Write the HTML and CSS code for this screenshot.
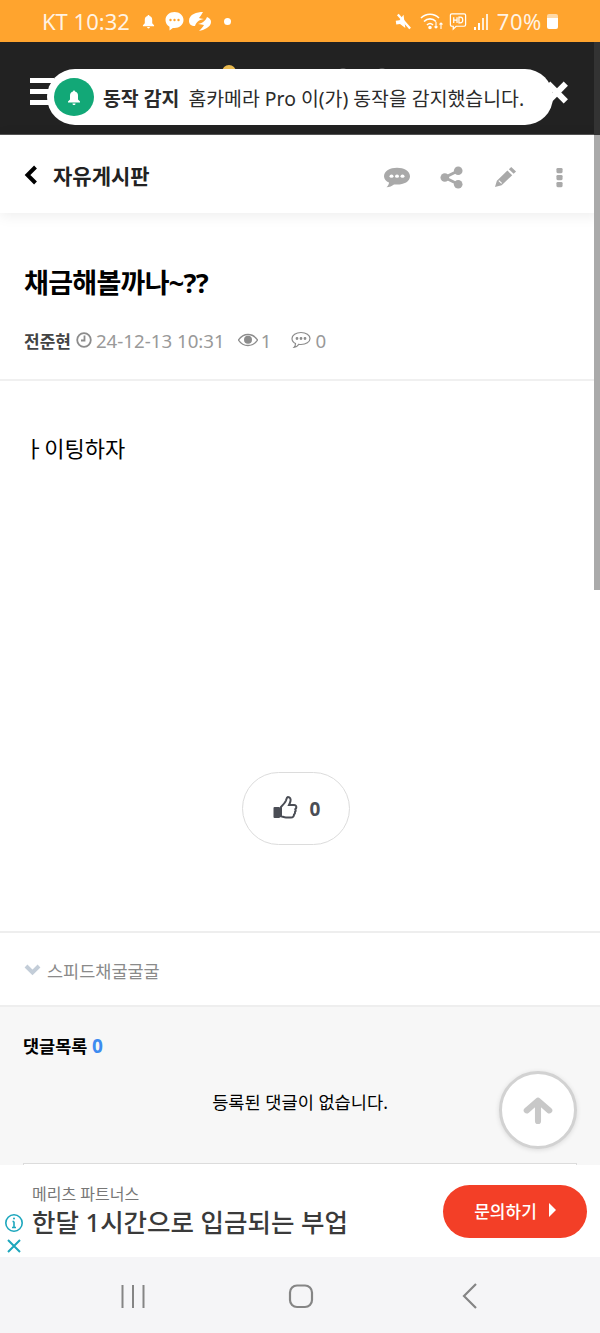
FILE: index.html
```html
<!DOCTYPE html>
<html lang="ko">
<head>
    <meta charset="UTF-8">
    <meta name="viewport" content="width=device-width, initial-scale=1.0">
    <title>자유게시판</title>
    <link rel="stylesheet" href="styles.css">
</head>
<body>

<div class="status-bar">
    <div class="status-left">
        <span class="status-text">KT 10:32</span>
        <svg class="st-bell" width="13" height="15" viewBox="0 0 14 16"><path d="M7 1c.7 0 1 .5 1 1 2 .5 3 2 3 4v4l2 2v1H1v-1l2-2V6c0-2 1-3.500 3-4 0-.5.3-1 1-1zM5.500 14h3c0 1-.6 1.500-1.500 1.500S5.500 15 5.500 14z" fill="#fff"/></svg>
        <svg class="st-chat" width="21" height="20" viewBox="0 0 20 20"><path d="M10 1c5 0 9 3.500 9 8s-4 8-9 8c-.6 0-1 0-1.600-.1L5 19.500v-3.700C2.500 14.300 1 11.800 1 9c0-4.500 4-8 9-8z" fill="#fff"/><circle cx="6" cy="9" r="1.200" fill="#ffa42e"/><circle cx="10" cy="9" r="1.200" fill="#ffa42e"/><circle cx="14" cy="9" r="1.200" fill="#ffa42e"/></svg>
        <svg class="st-swirl" width="22" height="21" viewBox="0 0 22 21"><path d="M14 1C8 1 0 3 0 10c0 3 2 5 6 5 1-3 3-6 9-7-3-.5-4-.8-5-1 2-2.500 3-4.500 4-6zM10 20c5-1 12-4 12-9 0-2-1-4-4-5-1 3-4 6-9 7 3 .5 4 .8 6 1-1 2-3 4-5 6z" fill="#fff"/></svg>
        <span class="status-dot"></span>
    </div>
    <div class="status-right">
        <svg class="st-mute" width="17" height="17" viewBox="0 0 18 18"><path d="M1 7h4l5-5v14l-5-5H1z" fill="#fff" transform="rotate(-8 9 9)"/><path d="M3 1.500l13 15" stroke="#fff" stroke-width="2.400"/></svg>
        <svg class="st-wifi" width="25" height="20" viewBox="0 0 25 20" fill="none" stroke="#fff" stroke-width="1.600"><path d="M1 7c5-5 13-5 18 0M4 10.500c3.500-3.500 8.500-3.500 12 0M7 14c2-2 4-2 6 0"/><circle cx="10" cy="16.500" r="1" fill="#fff"/><path d="M16 11v6M14.500 15.500L16 17l1.500-1.500M21 18v-6M19.500 13.500L21 12l1.500 1.500" stroke-width="1.100"/></svg>
        <svg class="st-hd" width="20" height="19" viewBox="0 0 20 20" fill="none" stroke="#fff" stroke-width="1.300"><path d="M3.500 2h13c1 0 1.500.5 1.500 1.500v10c0 1-.5 1.500-1.500 1.500H8l-3 3v-3H3.500C2.500 15 2 14.500 2 13.500v-10C2 2.500 2.500 2 3.500 2z"/><path d="M5.500 5.500v6M9 5.500v6M5.500 8.500H9M11 5.500v6h1.500c2 0 2.500-1.500 2.500-3s-.5-3-2.500-3z"/></svg>
        <svg class="st-signal" width="15" height="17" viewBox="0 0 15 17" fill="#fff"><rect x="0" y="14" width="2" height="3"/><rect x="4" y="10" width="2" height="7"/><rect x="8" y="5" width="2" height="12" opacity=".8"/><rect x="12" y="1" width="2" height="16" opacity=".8"/></svg>
        <span class="status-text pct">70%</span>
        <span class="battery"></span>
    </div>
</div>

<header class="top-bar">
    <div class="burger"><span></span><span></span><span></span></div>
    <span class="logo-bit gold"></span>
    <span class="logo-bit grey-one"></span>
    <span class="logo-bit grey-two"></span>
    <div class="close-mark"></div>
</header>

<div class="toast">
    <span class="toast-icon">
        <svg width="14" height="17" viewBox="0 0 14 16"><path d="M7 1c.7 0 1 .5 1 1 2 .5 3 2 3 4v4l2 2v1H1v-1l2-2V6c0-2 1-3.500 3-4 0-.5.3-1 1-1zM5.500 14h3c0 1-.6 1.500-1.500 1.500S5.500 15 5.500 14z" fill="#fff"/></svg>
    </span>
    <b class="toast-title">동작 감지</b>
    <span class="toast-text">홈카메라 Pro 이(가) 동작을 감지했습니다.</span>
</div>

<div class="sub-bar">
    <div class="sub-left">
        <svg width="16" height="20" viewBox="0 0 16 20"><path d="M12.500 2L4.500 10l8 8" fill="none" stroke="#000" stroke-width="4"/></svg>
        <span class="sub-title">자유게시판</span>
    </div>
    <div class="sub-icons">
        <svg class="ic-chat" width="28" height="22" viewBox="0 0 28 26" preserveAspectRatio="none"><path d="M14 2c7 0 13 4 13 10s-6 10-13 10c-1 0-2 0-3-.2C9 23.500 6.500 25 3.500 25c1.500-1.500 2.500-3.500 2.500-5.500C3 18 1 15.200 1 12 1 6 7 2 14 2z" fill="#a9a9a9"/><circle cx="8.500" cy="12" r="2" fill="#fff"/><circle cx="14" cy="12" r="2" fill="#fff"/><circle cx="19.500" cy="12" r="2" fill="#fff"/></svg>
        <svg class="ic-share" width="23" height="23" viewBox="0 0 24 24"><path d="M19 5L5 12l14 7" fill="none" stroke="#a9a9a9" stroke-width="3"/><circle cx="19" cy="5" r="4.500" fill="#a9a9a9"/><circle cx="5" cy="12" r="4.500" fill="#a9a9a9"/><circle cx="19" cy="19" r="4.500" fill="#a9a9a9"/></svg>
        <svg class="ic-pencil" width="23" height="22" viewBox="0 0 24 24" preserveAspectRatio="none"><path d="M18 1l5 5-2.500 2.500-5-5zM14 5l5 5L8 21l-7 2 2-7z" fill="#a9a9a9"/><path d="M5 16l3 3" stroke="#fff" stroke-width="1.200"/></svg>
        <svg class="ic-more" width="7" height="21" viewBox="0 0 8 24" preserveAspectRatio="none" fill="#a9a9a9"><rect x="0.500" y="1" width="7" height="6" rx="1.500"/><rect x="0.500" y="9" width="7" height="6" rx="1.500"/><rect x="0.500" y="17" width="7" height="6" rx="1.500"/></svg>
    </div>
</div>

<section class="post-head">
    <h1>채금해볼까나~??</h1>
    <div class="meta">
        <b class="author">전준현</b>
        <svg class="clock" width="16" height="16" viewBox="0 0 16 16" fill="none" stroke="#8c8c8c" stroke-width="1.800"><circle cx="8" cy="8" r="6.800"/><path d="M8.500 3.500v5H5"/></svg>
        <span>24-12-13 10:31</span>
        <svg class="eye" width="20" height="14" viewBox="0 0 20 14"><path d="M10 1.500c4 0 7.500 2.500 9.500 5.500-2 3-5.500 5.500-9.500 5.500S2.500 10 .5 7C2.500 4 6 1.500 10 1.500z" fill="none" stroke="#8c8c8c" stroke-width="1.300"/><circle cx="10" cy="6.800" r="4" fill="#8c8c8c"/></svg>
        <span>1</span>
        <svg class="bubble" width="20" height="18" viewBox="0 0 20 18" fill="none" stroke="#8c8c8c" stroke-width="1.200"><path d="M10 1.500c5 0 9 2.500 9 6s-4 6-9 6c-.8 0-1.500 0-2.200-.2C6.500 15 5 16.500 3 16.500c1-1 1.500-2.300 1.500-4C2.300 11.500 1 9.600 1 7.500c0-3.500 4-6 9-6z"/><circle cx="6" cy="7.500" r=".8" fill="#8c8c8c"/><circle cx="10" cy="7.500" r=".8" fill="#8c8c8c"/><circle cx="14" cy="7.500" r=".8" fill="#8c8c8c"/></svg>
        <span>0</span>
    </div>
</section>

<section class="post-body">
    <p class="post-text">ㅏ이팅하자</p>
    <div class="like-wrap">
        <button class="like-btn">
            <svg width="26" height="27" viewBox="0 0 26 26"><path d="M9 11.500c2-2 4-4 5-6.500.5-1.500.5-3 2-3.500 2 0 3 2 2.500 4-.3 1.500-1 3-1.500 4h5c1.500 0 2.500 1 2.300 2.500-.1.800-.5 1.200-1 1.700.5.800.4 2-.3 2.800.2 1-.1 2-1 2.500.1 1.500-1 3-3 3h-5c-2 0-3.500-1-5-1.200z" fill="none" stroke="#4a4d55" stroke-width="2"/><rect x="1.500" y="11.500" width="6.500" height="11" rx="1" fill="#4a4d55"/></svg>
            <span>0</span>
        </button>
    </div>
</section>

<div class="writer-row">
    <svg width="17" height="12" viewBox="0 0 17 12"><path d="M2 2l6.500 6.500L15 2" fill="none" stroke="#c3cdd8" stroke-width="4"/></svg>
    <span>스피드채굴굴굴</span>
</div>

<section class="comments">
    <h2>댓글목록 <em>0</em></h2>
    <p class="no-comment">등록된 댓글이 없습니다.</p>
    <div class="comment-box"></div>
    <a class="to-top">
        <svg width="30" height="27" viewBox="0 0 32 30" preserveAspectRatio="none"><path d="M16 27V5M4 15L16 4l12 11" fill="none" stroke="#c8c8c8" stroke-width="6.500" stroke-linejoin="round" stroke-linecap="round"/></svg>
    </a>
</section>

<aside class="ad">
    <div class="ad-marks">
        <svg width="20" height="20" viewBox="0 0 20 20" fill="none" stroke="#1da7bd" stroke-width="1.600"><circle cx="10" cy="10" r="8.200"/><path d="M10 8.500v6M8 14.500h4M8.500 8.500H10" /><circle cx="10" cy="5.500" r="1" fill="#1da7bd" stroke="none"/></svg>
        <svg width="16" height="16" viewBox="0 0 16 16"><path d="M2 2l12 12M14 2L2 14" stroke="#1da7bd" stroke-width="2"/></svg>
    </div>
    <div class="ad-copy">
        <div class="ad-brand">메리츠 파트너스</div>
        <div class="ad-line">한달 1시간으로 입금되는 부업</div>
    </div>
    <button class="ad-btn">문의하기<i></i></button>
</aside>

<nav class="nav-bar">
    <svg width="26" height="26" viewBox="0 0 26 26" stroke="#858585" stroke-width="2"><path d="M2.500 2v23M13 2v23M23.500 2v23"/></svg>
    <svg class="nav-home" width="26" height="26" viewBox="0 0 26 26" fill="none" stroke="#858585" stroke-width="2.200"><rect x="2" y="2.500" width="22" height="21.500" rx="7"/></svg>
    <svg class="nav-back" width="18" height="28" viewBox="0 0 18 28" fill="none" stroke="#858585" stroke-width="2.200"><path d="M15 2L3 14l12 12"/></svg>
</nav>

<div class="scrollbar"></div>

</body>
</html>
```

FILE: styles.css
```css
* {
    box-sizing: border-box;
}
html, body {
    margin: 0;
    height: 1333px;
    overflow: hidden;
}
body {
    position: relative;
    width: 600px;
    background: #fff;
    font-family: "Noto Sans", "Noto Sans CJK KR", sans-serif;
    color: #000;
}
svg {
    display: block;
    flex: none;
}

/* phone status bar */
.status-bar {
    height: 42px;
    background: #ffa42e;
    color: #fff;
    display: flex;
    justify-content: space-between;
    align-items: center;
    padding: 0 42px;
}
.status-left, .status-right {
    display: flex;
    align-items: center;
}
.status-text {
    font-size: 22px;
    line-height: 26px;
    white-space: nowrap;
    color: rgba(255, 255, 255, .88);
}
.status-text.pct {
    letter-spacing: .6px;
    margin-left: 8px;
}
.st-bell { margin-left: 12px; }
.st-chat { margin-left: 9px; }
.st-swirl { margin-left: 4px; }
.status-dot {
    width: 7px;
    height: 7px;
    border-radius: 50%;
    background: #fff;
    margin-left: 13px;
}
.st-wifi { margin-left: 8px; }
.st-hd { margin-left: 3px; }
.st-signal { margin-left: 6px; }
.battery {
    width: 11px;
    height: 15px;
    margin-left: 5px;
    border-radius: 2px;
    background: linear-gradient(#ffd9a6 0 30%, #fff 30%);
}

.top-bar {
    height: 93px;
    background: #222;
    border-bottom: 1px solid #555;
    position: relative;
    padding: 36px 0 0 30px;
}
.burger span {
    display: block;
    width: 24px;
    height: 5px;
    background: #fff;
    margin-bottom: 6px;
}
.logo-bit {
    position: absolute;
    top: 23px;
    width: 14px;
    height: 8px;
    border-radius: 7px 7px 0 0;
    background: #e8b94f;
}
.logo-bit.gold { left: 222px; }
.logo-bit.grey-one, .logo-bit.grey-two {
    top: 26px;
    width: 8px;
    background: #555;
}
.logo-bit.grey-one { left: 339px; }
.logo-bit.grey-two { left: 378px; }
.close-mark {
    position: absolute;
    left: 546px;
    top: 35px;
    width: 20px;
    height: 30px;
}
.close-mark::before, .close-mark::after {
    content: "";
    position: absolute;
    left: 8px;
    top: 3px;
    width: 6px;
    height: 25px;
    background: #fff;
    transform: rotate(45deg);
}
.close-mark::after {
    transform: rotate(-45deg);
}

.toast {
    position: absolute;
    left: 47px;
    top: 69px;
    width: 506px;
    height: 56px;
    background: #fff;
    border-radius: 28px;
    display: flex;
    align-items: center;
    padding-left: 7px;
    white-space: nowrap;
    color: #2b2b2b;
}
.toast-icon {
    width: 40px;
    height: 38px;
    border-radius: 50%;
    background: #12a877;
    display: flex;
    align-items: center;
    justify-content: center;
}
.toast-title {
    font-size: 19.400px;
    margin-left: 9px;
}
.toast-text {
    font-size: 19.400px;
    margin-left: 9px;
}

.sub-bar {
    height: 78px;
    background: #fff;
    display: flex;
    justify-content: space-between;
    align-items: center;
    padding: 6px 37px 0 23px;
    box-shadow: 0 2px 14px rgba(0, 0, 0, .08);
    position: relative;
}
.sub-left {
    display: flex;
    align-items: center;
    gap: 14px;
    margin-bottom: 4px;
}
.sub-title {
    font-size: 21px;
    font-weight: 700;
    color: #222;
}
.sub-icons {
    display: flex;
    align-items: center;
}
.ic-share { margin-left: 29px; }
.ic-pencil { margin-left: 31px; }
.ic-more { margin-left: 39px; }

.post-head {
    height: 168px;
    padding: 51px 24px 0;
    border-bottom: 2px solid #f0f0f0;
}
.post-head h1 {
    margin: 0;
    font-size: 27px;
    line-height: 38px;
    font-weight: 700;
    letter-spacing: -.7px;
}
.meta {
    display: flex;
    align-items: center;
    margin-top: 20px;
    height: 36px;
    font-size: 18.700px;
    color: #999;
}
.author {
    color: #444;
    font-size: 17px;
    margin-right: 5px;
}
.clock {
    margin-right: 4px;
}
.eye {
    margin: 0 3px 0 13px;
}
.bubble {
    margin: 0 4px 0 20px;
}

.post-body {
    height: 552px;
    padding: 0 32px 0 24px;
    border-bottom: 2px solid #eee;
}
.post-text {
    margin: 0;
    padding-top: 49px;
    font-size: 22px;
    line-height: 36px;
}
.like-wrap {
    display: flex;
    justify-content: center;
    margin-top: 306px;
}
.like-btn {
    width: 108px;
    height: 73px;
    border-radius: 37px;
    border: 1px solid #dcdcdc;
    background: #fff;
    display: flex;
    align-items: center;
    justify-content: center;
    gap: 12px;
    font-family: inherit;
    font-size: 19px;
    font-weight: 700;
    color: #4a4d55;
    padding: 0;
}

.writer-row {
    height: 74px;
    display: flex;
    align-items: center;
    gap: 6px;
    padding: 2px 24px 0;
    font-size: 17.500px;
    color: #8a8a8a;
    border-bottom: 2px solid #eee;
}

.comments {
    position: relative;
    height: 158px;
    background: #f7f7f7;
    padding: 26px 23px 0;
}
.comments h2 {
    margin: 0;
    font-size: 17.500px;
    line-height: 26px;
    font-weight: 700;
}
.comments em {
    font-style: normal;
    font-size: 19px;
    color: #3d8bf0;
}
.no-comment {
    margin: 0;
    padding-top: 30px;
    text-align: center;
    font-size: 17.600px;
    line-height: 26px;
}
.comment-box {
    position: absolute;
    left: 23px;
    right: 23px;
    top: 156px;
    height: 10px;
    border: 1px solid #dcdcdc;
    background: #fff;
}
.to-top {
    position: absolute;
    left: 499px;
    top: 64px;
    width: 78px;
    height: 78px;
    border-radius: 50%;
    background: #fff;
    border: 3px solid #d2d2d2;
    box-shadow: 0 1px 5px rgba(0, 0, 0, .12);
    display: flex;
    align-items: center;
    justify-content: center;
}

.ad {
    position: relative;
    height: 92px;
    background: #fff;
    display: flex;
    align-items: center;
    padding: 0 13px 0 4px;
}
.ad-marks {
    display: flex;
    flex-direction: column;
    gap: 5px;
    align-self: flex-end;
    align-items: center;
    padding-bottom: 3px;
    width: 20px;
}
.ad-copy {
    margin-left: 8px;
    flex: 1;
    padding-top: 2px;
}
.ad-brand {
    font-size: 16px;
    line-height: 20px;
    color: #777;
}
.ad-line {
    font-size: 25.500px;
    line-height: 36px;
    font-weight: 500;
    color: #3a3a3a;
}
.ad-btn {
    width: 144px;
    height: 53px;
    border: 0;
    border-radius: 27px;
    background: #f33f27;
    color: #fff;
    font-family: inherit;
    font-size: 17px;
    font-weight: 500;
    display: flex;
    align-items: center;
    justify-content: center;
    gap: 12px;
    padding: 0 0 2px;
}
.ad-btn i {
    width: 0;
    height: 0;
    border-left: 7px solid #fff;
    border-top: 7px solid transparent;
    border-bottom: 7px solid transparent;
}

.nav-bar {
    height: 76px;
    background: #f5f5f7;
    display: flex;
    align-items: center;
    padding: 1px 0 0 120px;
}
.nav-home { margin-left: 142px; }
.nav-back { margin-left: 147px; }

.scrollbar {
    position: absolute;
    left: 594px;
    top: 42px;
    width: 6px;
    height: 548px;
    background: linear-gradient(#333 0 93px, #aaa 93px);
}
```
